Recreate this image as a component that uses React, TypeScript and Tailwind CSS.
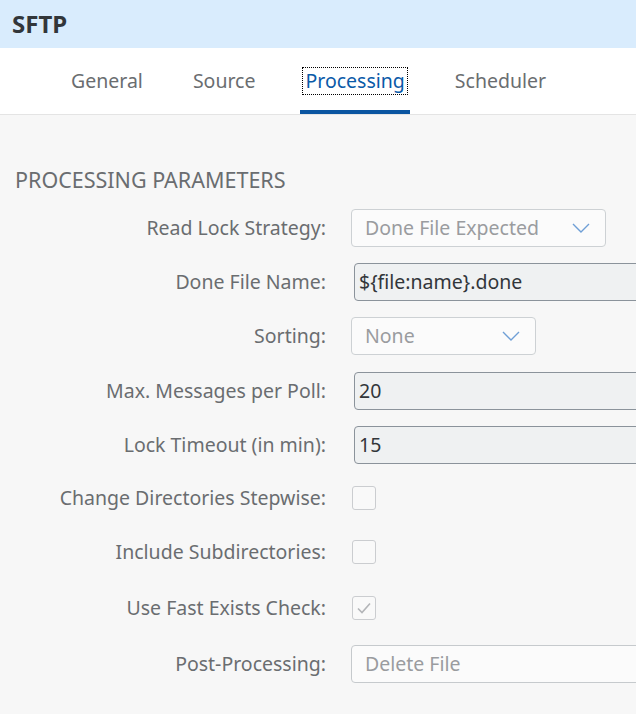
import React from "react";

const font = { fontFamily: '"Noto Sans", "Liberation Sans", sans-serif' };

const Chevron = () => (
  <svg width="18" height="10" viewBox="0 0 18 10" fill="none">
    <path d="M1 1l8 8 8-8" stroke="#6f9fd6" strokeWidth="1.4" />
  </svg>
);

const Select = ({ value, width }: { value: string; width: string }) => (
  <div
    className={`flex h-[38px] items-center justify-between rounded-[4px] border border-[#cdd1d4] bg-[#fbfbfb] pl-[13px] pr-[15px] text-[19.5px] text-[#9a9c9f] ${width}`}
  >
    <span>{value}</span>
    <Chevron />
  </div>
);

const Input = ({ value }: { value: string }) => (
  <div className="ml-[3px] -mr-[12px] flex h-[38px] flex-1 items-center rounded-l-[4px] border border-[#8b939b] bg-[#eff1f2] pl-[4px] text-[19.5px] text-[#32363a]">
    {value}
  </div>
);

const Checkbox = ({ checked }: { checked?: boolean }) => (
  <div className="ml-[1px] flex h-[24px] w-[24px] items-center justify-center rounded-[3px] border border-[#cbcdd0] bg-[#f9f9f9]">
    {checked && (
      <svg width="16" height="14" viewBox="0 0 16 14" fill="none">
        <path d="M2 7.5l4 4 8-9" stroke="#b3b5b8" strokeWidth="1.6" />
      </svg>
    )}
  </div>
);

const rows: { label: string; h: string; control: React.ReactNode }[] = [
  { label: "Read Lock Strategy:", h: "h-[54px]", control: <Select value="Done File Expected" width="w-[255px]" /> },
  { label: "Done File Name:", h: "h-[54px]", control: <Input value="${file:name}.done" /> },
  { label: "Sorting:", h: "h-[54px]", control: <Select value="None" width="w-[185px]" /> },
  { label: "Max. Messages per Poll:", h: "h-[55px]", control: <Input value="20" /> },
  { label: "Lock Timeout (in min):", h: "h-[53px]", control: <Input value="15" /> },
  { label: "Change Directories Stepwise:", h: "h-[54px]", control: <Checkbox /> },
  { label: "Include Subdirectories:", h: "h-[54px]", control: <Checkbox /> },
  { label: "Use Fast Exists Check:", h: "h-[57px]", control: <Checkbox checked /> },
  {
    label: "Post-Processing:",
    h: "h-[55px]",
    control: (
      <div className="-mr-[12px] flex h-[38px] flex-1 items-center rounded-l-[4px] border border-[#c6cacd] bg-[#fbfbfb] pl-[13px] text-[19.5px] text-[#9a9c9f]">
        Delete File
      </div>
    ),
  },
];

export default function App() {
  const tabs = ["General", "Source", "Processing", "Scheduler"];
  return (
    <div className="h-[714px] w-[636px] overflow-hidden bg-[#f7f7f7]" style={font}>
      <div className="flex h-[48px] items-center bg-[#d9ecfd] px-[12px] text-[24px] font-bold text-[#32363a]">
        SFTP
      </div>
      <div className="flex h-[67px] items-stretch gap-[40px] border-b border-[#e4e4e4] bg-white pl-[66px]">
        {tabs.map((t) => {
          const active = t === "Processing";
          return (
            <div
              key={t}
              className={`flex flex-col items-center justify-end px-[3px] ${active ? "border-b-[4px] border-[#0a55a1] text-[#0a5aa8]" : "border-b-[4px] border-transparent text-[#6a6d70]"}`}
            >
              <span
                className={`mb-[16px] px-[2px] text-[19.5px] leading-[26px] ${active ? "outline outline-1 outline-dotted outline-black" : ""}`}
              >
                {t}
              </span>
            </div>
          );
        })}
      </div>
      <div className="pl-[15px] pt-[52px] text-[21.5px] leading-[26px] text-[#6a6d70]">PROCESSING PARAMETERS</div>
      <div className="mt-[8px] flex flex-col">
        {rows.map((r) => (
          <div key={r.label} className={`flex items-center ${r.h}`}>
            <div className="w-[326px] shrink-0 text-right text-[19.5px] text-[#6a6d70]">{r.label}</div>
            <div className="ml-[25px] flex flex-1 items-center">{r.control}</div>
          </div>
        ))}
      </div>
    </div>
  );
}
